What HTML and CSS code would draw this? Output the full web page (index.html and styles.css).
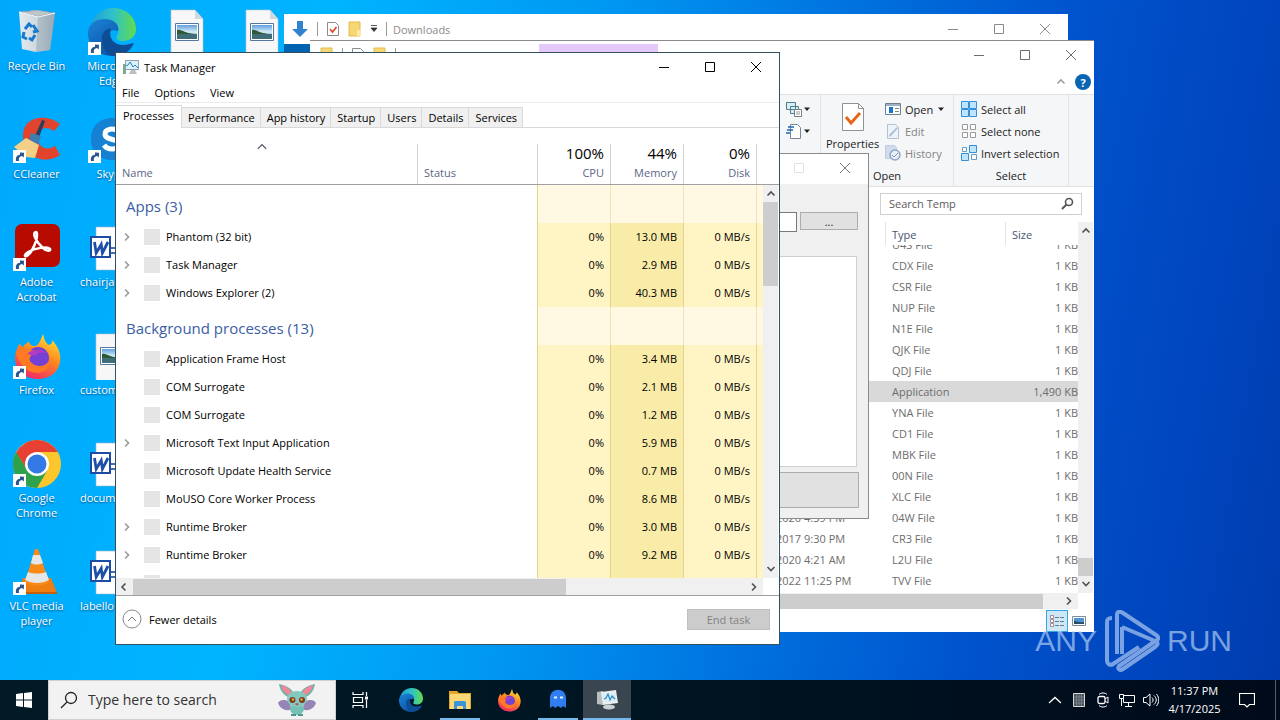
FILE: index.html
```html
<!DOCTYPE html>
<html lang="en">
<head>
<meta charset="utf-8">
<title>Desktop</title>
<link rel="stylesheet" href="styles.css">
</head>
<body>
<svg class="defs" aria-hidden="true">
  <defs>
    <linearGradient id="edgeA" x1="0" y1="0.3" x2="1" y2="0.3"><stop offset="0" stop-color="#1d9fdc"/><stop offset="0.5" stop-color="#2fc2c8"/><stop offset="1" stop-color="#62dc4c"/></linearGradient>
    <linearGradient id="edgeB" x1="0" y1="0" x2="0.6" y2="1"><stop offset="0" stop-color="#1b84d8"/><stop offset="1" stop-color="#0c55a8"/></linearGradient>
    <linearGradient id="fox" x1="0.8" y1="0" x2="0.3" y2="1"><stop offset="0" stop-color="#ffe53a"/><stop offset="0.45" stop-color="#ff8a1e"/><stop offset="1" stop-color="#f0256a"/></linearGradient>
    <linearGradient id="pic" x1="0" y1="0" x2="0" y2="1"><stop offset="0" stop-color="#5f9fe0"/><stop offset="0.5" stop-color="#d6ecf6"/><stop offset="1" stop-color="#79a8bb"/></linearGradient>
    <linearGradient id="bin" x1="0" y1="0" x2="1" y2="0"><stop offset="0" stop-color="#e3eaf0"/><stop offset="0.65" stop-color="#c9d3db"/><stop offset="1" stop-color="#8fa3b2"/></linearGradient>
  </defs>
  <symbol id="shortcut" viewBox="0 0 13 13"><path d="M0 0h13v13H0z" fill="#fff"/><path d="M3 11C2.500 7 4 5 7 4.800V2.500l4 .3L10.800 7.500 9 6C6 6.500 5.500 8.500 6 11z" fill="#29558f"/></symbol>
  <symbol id="edge" viewBox="0 0 48 48"><path d="M2 20C4 7 15 0 25 0c14 0 23 10 23 21 0 8-6 12-13 12-5 0-8-2-6-5 4-7-1-13-8-13C12 15 5 18 2 20z" fill="url(#edgeA)"/><path d="M0 25C0 15 9 11 17 11c9 0 15 6 13 12-8-3-14 3-11 12 2 8 9 12 13 12C15 51 0 41 0 25z" fill="url(#edgeB)"/><path d="M14 30c0-6 5-10 9-9-3 9 3 16 12 16 5 0 9-2 11-2-3 8-12 13-21 13-7-1-11-9-11-18z" fill="#0e4c94"/></symbol>
  <symbol id="firefox" viewBox="0 0 48 48"><path d="M30 2c2 6 1 7 6 11 4-1 3-4 3-5 8 8 10 18 7 26-3 8-11 13-21 13C12 47 2 38 2 26 2 20 4 16 7 11c1 3 2 4 3 4 3-5 4-2 5-6 2 3 3 5 7 5 3 0 5-4 8-12z" fill="url(#fox)"/><circle cx="25" cy="26" r="11" fill="#7540d4"/><path d="M3 20c5-6 10-3 15-2 3 0 5 2 2 4-5 3-4 8 0 10 6 4 13 2 17-4 1 13-16 17-25 8-4-4-8-10-9-16z" fill="#ff7a22"/><path d="M14 22c5-5 15-6 20 0-6-3-10-1-11 2z" fill="#b13cc4"/></symbol>
  <symbol id="picture" viewBox="0 0 48 48"><path d="M8 2h24l8 9v41H8z" fill="#f7f7f7" stroke="#bfc5ca" stroke-width=".6"/><path d="M32 2v9h8z" fill="#d2d9de"/><path d="M12.500 15.500h23v17h-23z" fill="#fff" stroke="#5277a0"/><path d="M14 17h20v14H14z" fill="url(#pic)"/><path d="M14 25c6-2 12 1 20 1v5H14z" fill="#3f6d78"/><path d="M14 22c5-1 8 4 17 4H14z" fill="#2d5a35"/></symbol>
  <symbol id="word" viewBox="0 0 48 48"><path d="M8 3h32v43H8z" fill="#fff" stroke="#9fb4cf" stroke-width=".6"/><path d="M22 24h16M22 29h16" stroke="#466fb3" stroke-width="2"/><path d="M2 12h21v22H2z" fill="#fff"/><path d="M3 13h19v20H3z" fill="none" stroke="#1c4ca4" stroke-width="2"/><path d="M6.500 18l1.700 11 5-8.500 1.200 8.500L20 18" fill="none" stroke="#1d4fa8" stroke-width="2.800"/></symbol>
  <symbol id="min" viewBox="0 0 12 12"><path d="M1 6.500h10" stroke="currentColor"/></symbol>
  <symbol id="max" viewBox="0 0 12 12"><path d="M1.500 1.500h9v9h-9z" fill="none" stroke="currentColor"/></symbol>
  <symbol id="close" viewBox="0 0 12 12"><path d="M1 1l10 10M11 1L1 11" stroke="currentColor"/></symbol>
  <symbol id="up" viewBox="0 0 10 10"><path d="M1.500 6.500L5 3l3.500 3.500" fill="none" stroke="currentColor" stroke-width="1.600"/></symbol>
  <symbol id="down" viewBox="0 0 10 10"><path d="M1.500 3L5 6.500 8.500 3" fill="none" stroke="currentColor" stroke-width="1.600"/></symbol>
  <symbol id="left" viewBox="0 0 10 10"><path d="M6.500 1.500L3 5l3.500 3.500" fill="none" stroke="currentColor" stroke-width="1.600"/></symbol>
  <symbol id="right" viewBox="0 0 10 10"><path d="M3 1.500L6.500 5 3 8.500" fill="none" stroke="currentColor" stroke-width="1.600"/></symbol>
  <symbol id="caret" viewBox="0 0 8 8"><path d="M1 2.500h6L4 6z" fill="currentColor"/></symbol>
  <symbol id="folder" viewBox="0 0 14 16"><path d="M1 1h11v14H1z" fill="#f7d774" stroke="#e4bb4a"/><path d="M9 9h4v6H9z" fill="#ffe9a6"/></symbol>
  <symbol id="checkdoc" viewBox="0 0 14 16"><path d="M1.500 1.500h8l3 3v10h-11z" fill="#fff" stroke="#8a8a8a"/><path d="M4 8l2.500 3L10.500 6" fill="none" stroke="#d9532c" stroke-width="1.800"/></symbol>
  <symbol id="monitor" viewBox="0 0 16 16"><path d="M0 5h3v10H0z" fill="#7ba98a"/><path d="M2.500 1.500h13v9h-13z" fill="#dcf3fb" stroke="#8aa0ad"/><path d="M3 7l2-1 2-3 3 5 2-2 3 3" fill="none" stroke="#2a7fb8"/><path d="M8 11h4l2 4H6z" fill="#b8c0c6"/></symbol>
</svg>

<div class="screen">
<main class="desktop">
  <div class="icons">
    <a class="icon" href="#"><svg viewBox="0 0 48 48"><path d="M6 4l18-2 18 3-5 37-14 2-14-3z" fill="url(#bin)"/><path d="M6 4l18-2 18 3-17 4z" fill="#8d979e"/><path d="M9 4.500l15-2 15 2.500-14 3z" fill="#bec6cb"/><path d="M25 9l17-4-5 37-14 2z" fill="#9aabb8" opacity=".6"/><path d="M6 4l19 5 17-4" fill="none" stroke="#f4f7f9" stroke-width="1.200"/><path d="M12 21l4-5 3 3M20 17l4 6-4 1M22 27l-3 5-3-2M14 31l-4-2 1-5" fill="none" stroke="#1879cf" stroke-width="3"/></svg><span>Recycle Bin</span></a>
    <a class="icon" href="#"><svg viewBox="0 0 48 48"><path d="M47 8C34-3 10 0 10 19c0 24 23 30 37 20l-5-9c-8 5-17 2-17-8s8-13 16-7z" fill="#e2432d"/><path d="M29 4l3 1-7 19-4-2z" fill="#283e5e"/><path d="M18 17l10 3-3 9-9-5z" fill="#3e7eae"/><path d="M1 31l12-9 13 7-4 13-9-1z" fill="#f3cf87"/><use href="#shortcut" x="0" y="34" width="13" height="13"/></svg><span>CCleaner</span></a>
    <a class="icon" href="#"><svg viewBox="0 0 48 48"><rect x="2" y="0" width="45" height="43" rx="7" fill="#b80b00"/><path d="M23 8c-4 0-1 9 7 16 4 4 8 3 7 1-2-3-15-1-22 3-5 3-3 6 0 3 4-3 9-14 9-20 0-2 0-3-1-3z" fill="none" stroke="#fff" stroke-width="2.500"/><use href="#shortcut" x="0" y="34" width="13" height="13"/></svg><span>Adobe Acrobat</span></a>
    <a class="icon" href="#"><svg viewBox="0 0 48 48"><use href="#firefox" width="48" height="48"/><use href="#shortcut" x="0" y="34" width="13" height="13"/></svg><span>Firefox</span></a>
    <a class="icon" href="#"><svg viewBox="0 0 48 48"><circle cx="24" cy="24" r="24" fill="#fcc62d"/><path d="M3 13A24 24 0 0 1 45 12H24L14 29z" fill="#e84134"/><path d="M3 12A24 24 0 0 0 24 48L34 31 13 28z" fill="#2da24b"/><circle cx="24" cy="24" r="12" fill="#fff"/><circle cx="24" cy="24" r="9.500" fill="#3579e6"/><use href="#shortcut" x="0" y="34" width="13" height="13"/></svg><span>Google Chrome</span></a>
    <a class="icon" href="#"><svg viewBox="0 0 48 48"><path d="M10 30h28l6 15H6z" fill="#ee7d12"/><path d="M6 44h38v2H6z" fill="#c85f08"/><path d="M22 1h3l11 33c-6 5-18 5-24 0z" fill="#f98a18"/><path d="M20 7h7l3 8c-4 2-9 2-12 0z" fill="#e5e6e8"/><path d="M15 24c6 2 13 2 18 0l3 8c-7 4-17 4-24 0z" fill="#e5e6e8"/><use href="#shortcut" x="0" y="34" width="13" height="13"/></svg><span>VLC media player</span></a>
    <a class="icon" href="#"><svg viewBox="0 0 48 48"><use href="#edge" width="48" height="48"/><use href="#shortcut" x="0" y="34" width="13" height="13"/></svg><span>Microsoft Edge</span></a>
    <a class="icon" href="#"><svg viewBox="0 0 48 48"><rect x="3" y="2" width="42" height="42" rx="20" fill="#1681d2"/><path d="M31 16c-5-5-14-3-14 2 0 7 14 4 14 10 0 6-11 7-15 1" fill="none" stroke="#fff" stroke-width="5"/><use href="#shortcut" x="0" y="34" width="13" height="13"/></svg><span>Skype</span></a>
    <a class="icon cut" href="#"><svg viewBox="0 0 48 48"><use href="#word" width="48" height="48"/></svg><span>chairja</span></a>
    <a class="icon cut" href="#"><svg viewBox="0 0 48 48"><use href="#picture" width="48" height="48"/></svg><span>custom</span></a>
    <a class="icon cut" href="#"><svg viewBox="0 0 48 48"><use href="#word" width="48" height="48"/></svg><span>docum</span></a>
    <a class="icon cut" href="#"><svg viewBox="0 0 48 48"><use href="#word" width="48" height="48"/></svg><span>labello</span></a>
    <a class="icon third" href="#" aria-label="Image file"><svg viewBox="0 0 48 48"><use href="#picture" width="48" height="48"/></svg></a>
    <a class="icon fourth" href="#" aria-label="Image file"><svg viewBox="0 0 48 48"><use href="#picture" width="48" height="48"/></svg></a>
  </div>

  <section class="window downloads">
    <header class="titlebar">
      <svg class="i18" viewBox="0 0 18 18"><path d="M6 1h6v8h5l-8 8-8-8h5z" fill="#2f83cf"/></svg>
      <span class="sep"></span>
      <svg class="tool" viewBox="0 0 14 16"><use href="#checkdoc" width="14" height="16"/></svg>
      <svg class="tool" viewBox="0 0 14 16"><use href="#folder" width="14" height="16"/></svg>
      <svg class="i8" viewBox="0 0 8 8"><path d="M1 0.500h6M1 3h6L4 6.500z" stroke="#333" fill="#333" stroke-width=".8"/></svg>
      <span class="sep"></span>
      <span class="title">Downloads</span>
      <button aria-label="Minimize"><svg><use href="#min"/></svg></button>
      <button aria-label="Maximize"><svg><use href="#max"/></svg></button>
      <button aria-label="Close"><svg><use href="#close"/></svg></button>
    </header>
    <div class="filetab"></div>
  </section>

  <section class="window temp">
    <header class="titlebar">
      <svg class="tool" viewBox="0 0 14 16"><use href="#folder" width="14" height="16"/></svg>
      <span class="sep"></span>
      <svg class="tool" viewBox="0 0 14 16"><use href="#checkdoc" width="14" height="16"/></svg>
      <svg class="tool" viewBox="0 0 14 16"><use href="#folder" width="14" height="16"/></svg>
      <span class="sep"></span>
      <span class="apptools"></span>
      <span class="title">Temp</span>
      <button aria-label="Minimize"><svg><use href="#min"/></svg></button>
      <button aria-label="Maximize"><svg><use href="#max"/></svg></button>
      <button aria-label="Close"><svg><use href="#close"/></svg></button>
    </header>
    <div class="ribbontabs">
      <svg class="i10" viewBox="0 0 10 10"><use href="#up" width="10" height="10"/></svg>
      <button class="help" aria-label="Help">?</button>
    </div>
    <div class="ribbon">
      <div class="group new">
        <button aria-label="New item"><svg class="i16" viewBox="0 0 16 16"><path d="M.5 1.500h9v7h-9zM4.500 5.500h8v7h-8z" fill="#d8eef4" stroke="#4c7e8d"/><path d="M8.500 8.500h7v7h-7z" fill="#fff" stroke="#7b7b7b"/><path d="M10 11h4M10 13h4" stroke="#999"/></svg><svg class="i8"><use href="#caret"/></svg></button>
        <button aria-label="Easy access"><svg class="i16" viewBox="0 0 16 16"><path d="M4.500 1.500h7l3 3v11h-10z" fill="#fff" stroke="#77879a"/><path d="M2 4h6M1 7h6M0 10h4" stroke="#1b68b2" stroke-width="1.500"/></svg><svg class="i8"><use href="#caret"/></svg></button>
      </div>
      <div class="group open">
        <div class="cols">
          <button class="props"><svg viewBox="0 0 24 30"><path d="M1.500 1.500h16l5 5v22h-21z" fill="#fff" stroke="#929292"/><path d="M17.500 1.500v5h5" fill="none" stroke="#929292"/><path d="M5 15l5 6 9-10" fill="none" stroke="#e8641b" stroke-width="3"/></svg><span>Properties</span></button>
          <div class="stack">
            <button><svg class="i16" viewBox="0 0 16 16"><path d="M.5 2.500h15v11H.5z" fill="#fff" stroke="#6e7f90"/><path d="M1 3h14v2H1z" fill="#9fb2c2"/><path d="M4 6h4v6H4z" fill="#1377cd"/><path d="M10 7.500h4M10 10.500h4" stroke="#888"/></svg>Open<svg class="i8"><use href="#caret"/></svg></button>
            <button disabled><svg class="i16" viewBox="0 0 16 16"><path d="M2.500 1.500h8l3 3v11h-11z" fill="#eef3f9" stroke="#b3c1d1"/><path d="M13 5l-7 8-2 1 .5-2.500L12 4z" fill="#a9bcd6"/></svg>Edit</button>
            <button disabled><svg class="i16" viewBox="0 0 16 16"><path d="M.5.500h9l2 2v11H.5z" fill="#d3dcec" stroke="#c0cde2"/><circle cx="10" cy="10" r="5" fill="#e8eef6" stroke="#8ea6c6" stroke-width="1.500"/><path d="M7 10l2 2 4-4" stroke="#8297b6" fill="none"/></svg>History</button>
          </div>
        </div>
        <span class="caption">Open</span>
      </div>
      <div class="group select">
        <div class="stack">
          <button><svg class="i16" viewBox="0 0 16 16"><path d="M.5.500h7v7h-7zM8.500.500h7v7h-7zM.5 8.500h7v7h-7zM8.500 8.500h7v7h-7z" fill="#bfe4fb" stroke="#3191da"/></svg>Select all</button>
          <button><svg class="i16" viewBox="0 0 16 16"><path d="M1.500 1.500h5v5h-5zM9.500 1.500h5v5h-5zM1.500 9.500h5v5h-5zM9.500 9.500h5v5h-5z" fill="#fff" stroke="#999"/></svg>Select none</button>
          <button><svg class="i16" viewBox="0 0 16 16"><path d="M8.500.500h7v7h-7zM.5 8.500h7v7h-7z" fill="#bfe4fb" stroke="#3191da"/><path d="M1.500 2.500h4v4h-4zM10.500 9.500h5v5h-5z" fill="#fff" stroke="#6a9cc4"/></svg>Invert selection</button>
        </div>
        <span class="caption">Select</span>
      </div>
    </div>
    <div class="navrow">
      <label class="search"><input type="text" placeholder="Search Temp" aria-label="Search Temp"><svg class="i14" viewBox="0 0 14 14"><circle cx="9" cy="5" r="3.500" fill="none" stroke="#555" stroke-width="1.600"/><path d="M6.500 7.500L2 12" stroke="#555" stroke-width="2"/></svg></label>
    </div>
    <div class="files">
      <div class="filepane">
        <div class="filescroll">
          <table class="filetable">
            <colgroup><col><col class="cdate"><col class="ctype"><col class="csize"></colgroup>
            <thead><tr><th></th><th></th><th>Type</th><th>Size</th></tr></thead>
            <tbody>
              <tr class="under"><td></td><td></td><td><span>U4S File</span></td><td><span>1 KB</span></td></tr>
              <tr><td></td><td></td><td>CDX File</td><td>1 KB</td></tr>
              <tr><td></td><td></td><td>CSR File</td><td>1 KB</td></tr>
              <tr><td></td><td></td><td>NUP File</td><td>1 KB</td></tr>
              <tr><td></td><td></td><td>N1E File</td><td>1 KB</td></tr>
              <tr><td></td><td></td><td>QJK File</td><td>1 KB</td></tr>
              <tr><td></td><td></td><td>QDJ File</td><td>1 KB</td></tr>
              <tr class="picked"><td></td><td></td><td>Application</td><td>1,490 KB</td></tr>
              <tr><td></td><td></td><td>YNA File</td><td>1 KB</td></tr>
              <tr><td></td><td></td><td>CD1 File</td><td>1 KB</td></tr>
              <tr><td></td><td></td><td>MBK File</td><td>1 KB</td></tr>
              <tr><td></td><td></td><td>00N File</td><td>1 KB</td></tr>
              <tr><td></td><td></td><td>XLC File</td><td>1 KB</td></tr>
              <tr><td></td><td>2020 4:39 PM</td><td>04W File</td><td>1 KB</td></tr>
              <tr><td></td><td>2017 9:30 PM</td><td>CR3 File</td><td>1 KB</td></tr>
              <tr><td></td><td>2020 4:21 AM</td><td>L2U File</td><td>1 KB</td></tr>
              <tr><td></td><td>2022 11:25 PM</td><td>TVV File</td><td>1 KB</td></tr>
            </tbody>
          </table>
        </div>
        <div class="hscroll"><i class="thumb"></i><svg class="i10"><use href="#right"/></svg></div>
      </div>
      <div class="vscroll"><svg class="i10"><use href="#up"/></svg><i class="thumb"></i><svg class="i10"><use href="#down"/></svg></div>
    </div>
    <footer class="status">
      <button class="on" aria-label="Details view"><svg class="i16" viewBox="0 0 16 16"><path d="M1.500 2.500h3v3h-3zM1.500 6.500h3v3h-3zM1.500 10.500h3v3h-3z" fill="#fff" stroke="#a98a92"/><path d="M6 4.500h4M11 4.500h4M6 8.500h4M11 8.500h4M6 12.500h4M11 12.500h4" stroke="#6c7a83"/></svg></button>
      <button aria-label="Icon view"><svg class="i14" viewBox="0 0 14 14"><path d="M.5 2.500h13v9H.5z" fill="#fff" stroke="#7e8b99"/><path d="M2 4h10v6H2z" fill="#4e94d4"/><path d="M2 7c4 0 5 2 10 1v2H2z" fill="#284e66"/></svg></button>
    </footer>
  </section>

  <section class="window dialog">
    <header class="titlebar">
      <span class="title"></span>
      <button class="faint" aria-label="Maximize" disabled><svg><use href="#max"/></svg></button>
      <button aria-label="Close"><svg><use href="#close"/></svg></button>
    </header>
    <div class="dialogbody">
      <div class="pick"><input type="text" aria-label="Path"><button>...</button></div>
      <div class="log"></div>
      <button class="big" aria-label="Run"></button>
    </div>
  </section>

  <section class="window taskmgr">
    <header class="titlebar">
      <svg class="i16" viewBox="0 0 16 16"><use href="#monitor" width="16" height="16"/></svg>
      <span class="title">Task Manager</span>
      <button aria-label="Minimize"><svg><use href="#min"/></svg></button>
      <button aria-label="Maximize"><svg><use href="#max"/></svg></button>
      <button aria-label="Close"><svg><use href="#close"/></svg></button>
    </header>
    <nav class="menubar"><button>File</button><button>Options</button><button>View</button></nav>
    <nav class="tabs"><button class="on">Processes</button><button>Performance</button><button>App history</button><button>Startup</button><button>Users</button><button>Details</button><button>Services</button></nav>
    <div class="procs">
      <div class="procview">
        <table class="proctable">
          <colgroup><col><col class="cstatus"><col class="cnum"><col class="cnum"><col class="cnum"><col class="crest"></colgroup>
          <thead><tr>
            <th><svg class="i12 sort" viewBox="0 0 10 10"><path d="M1.500 6.500L5 3l3.500 3.500" fill="none" stroke="#4a4f63"/></svg><div>Name</div></th>
            <th><div>Status</div></th>
            <th><div><b>100%</b>CPU</div></th><th><div><b>44%</b>Memory</div></th><th><div><b>0%</b>Disk</div></th><th></th>
          </tr></thead>
          <tbody>
            <tr class="section"><td>Apps (3)</td><td></td><td></td><td></td><td></td><td></td></tr>
            <tr><td><div><svg class="exp"><use href="#right"/></svg><i></i>Phantom (32 bit)</div></td><td></td><td>0%</td><td>13.0 MB</td><td>0 MB/s</td><td></td></tr>
            <tr><td><div><svg class="exp"><use href="#right"/></svg><i></i>Task Manager</div></td><td></td><td>0%</td><td>2.9 MB</td><td>0 MB/s</td><td></td></tr>
            <tr><td><div><svg class="exp"><use href="#right"/></svg><i></i>Windows Explorer (2)</div></td><td></td><td>0%</td><td>40.3 MB</td><td>0 MB/s</td><td></td></tr>
            <tr class="section"><td>Background processes (13)</td><td></td><td></td><td></td><td></td><td></td></tr>
            <tr><td><div><svg class="exp"></svg><i></i>Application Frame Host</div></td><td></td><td>0%</td><td>3.4 MB</td><td>0 MB/s</td><td></td></tr>
            <tr><td><div><svg class="exp"></svg><i></i>COM Surrogate</div></td><td></td><td>0%</td><td>2.1 MB</td><td>0 MB/s</td><td></td></tr>
            <tr><td><div><svg class="exp"></svg><i></i>COM Surrogate</div></td><td></td><td>0%</td><td>1.2 MB</td><td>0 MB/s</td><td></td></tr>
            <tr><td><div><svg class="exp"><use href="#right"/></svg><i></i>Microsoft Text Input Application</div></td><td></td><td>0%</td><td>5.9 MB</td><td>0 MB/s</td><td></td></tr>
            <tr><td><div><svg class="exp"></svg><i></i>Microsoft Update Health Service</div></td><td></td><td>0%</td><td>0.7 MB</td><td>0 MB/s</td><td></td></tr>
            <tr><td><div><svg class="exp"></svg><i></i>MoUSO Core Worker Process</div></td><td></td><td>0%</td><td>8.6 MB</td><td>0 MB/s</td><td></td></tr>
            <tr><td><div><svg class="exp"><use href="#right"/></svg><i></i>Runtime Broker</div></td><td></td><td>0%</td><td>3.0 MB</td><td>0 MB/s</td><td></td></tr>
            <tr><td><div><svg class="exp"><use href="#right"/></svg><i></i>Runtime Broker</div></td><td></td><td>0%</td><td>9.2 MB</td><td>0 MB/s</td><td></td></tr>
            <tr><td><div><svg class="exp"></svg><i></i></div></td><td></td><td></td><td></td><td></td><td></td></tr>
          </tbody>
        </table>
      </div>
      <div class="vside">
        <div class="headcap"></div>
        <div class="vscroll"><svg class="i10"><use href="#up"/></svg><i class="thumb"></i><svg class="i10"><use href="#down"/></svg></div>
      </div>
    </div>
    <div class="hscroll"><svg class="i10"><use href="#left"/></svg><i class="thumb"></i><svg class="i10"><use href="#right"/></svg></div>
    <footer class="tmfoot">
      <button class="fewer"><svg viewBox="0 0 20 20"><circle cx="10" cy="10" r="9" fill="none" stroke="#8a8a8a"/><path d="M6 12l4-4 4 4" fill="none" stroke="#777"/></svg>Fewer details</button>
      <button class="endtask" disabled>End task</button>
    </footer>
  </section>

  <div class="watermark">
    <span>ANY</span>
    <svg viewBox="0 0 56 62"><path d="M8 8c-4 0-5 1-5 4v38c0 4 3 6 6 4l26-17M13 44V5c0-4 3-4 6-2l33 22c3 2 3 4 0 6M18 17l33 14c4 2 3 4 0 6L19 59c-3 2-6 0-4-3l35-24M18 17v27" fill="none" stroke="currentColor" stroke-width="4" stroke-linejoin="round"/></svg>
    <span>RUN</span>
  </div>
</main>

<footer class="taskbar">
  <button class="start" aria-label="Start"><svg class="i16" viewBox="0 0 16 16"><path d="M0 2l7-1v6.500H0zM8 .9L16 0v7.500H8zM0 8.500h7V15l-7-1zM8 8.500h8V16l-8-1z" fill="#fff"/></svg></button>
  <label class="tasksearch">
    <svg class="i18" viewBox="0 0 18 18"><circle cx="11" cy="7" r="5.500" fill="none" stroke="#222" stroke-width="1.300"/><path d="M7 11l-6 6" stroke="#222" stroke-width="1.300"/></svg>
    <input type="text" placeholder="Type here to search" aria-label="Type here to search">
    <svg class="critter" viewBox="0 0 38 34"><path d="M12 19C5 15 1 18 0 20c2 6 9 9 13 6zM26 19c7-4 11-1 12 1-2 6-9 9-13 6z" fill="#9584b5"/><path d="M13 15C5 13 2 7 1 1c6 1 13 4 15 10zM25 15C33 13 36 7 37 1c-6 1-13 4-15 10z" fill="#6db5aa"/><path d="M13 13C7 11 4 7 3 2c5 1 9 4 11 8zM25 13C31 11 34 7 35 2c-5 1-9 4-11 8z" fill="#ef8795"/><ellipse cx="19" cy="26" rx="7" ry="6" fill="#75c2b4"/><ellipse cx="19" cy="16" rx="10" ry="8" fill="#83c9bd"/><circle cx="14.500" cy="17" r="3" fill="#7a3d1e"/><circle cx="24" cy="17" r="3" fill="#7a3d1e"/><circle cx="15" cy="16.500" r="1.200" fill="#e9a648"/><circle cx="23.500" cy="16.500" r="1.200" fill="#e9a648"/><path d="M17 21l2-1 2 1-2 1.500z" fill="#c2495b"/><path d="M13 31h5v2h-5zM20 31h5v2h-5z" fill="#4d958d"/></svg>
  </label>
  <button class="view" aria-label="Task View"><svg class="i16" viewBox="0 0 16 16"><path d="M1 0v2.500h10V0M1.500 5.500h9v5h-9zM1 16v-2.500h10V16M14.500 0v4M14.500 8v8" fill="none" stroke="#fff" stroke-width="1.200"/><path d="M13 4.500h3v3h-3z" fill="#fff"/></svg></button>
  <div class="apps">
    <button aria-label="Edge"><svg class="i24" viewBox="0 0 48 48"><use href="#edge" width="48" height="48"/></svg></button>
    <button class="run" aria-label="File Explorer"><svg class="i24" viewBox="0 0 24 24"><path d="M1 3h8l2 2h12v16H1z" fill="#e6a629"/><path d="M2 6h20v15H2z" fill="#fcd775"/><path d="M6 21v-6c0-2 1-2 2-2h8c2 0 2 1 2 2v6h-3v-3H9v3z" fill="#3a94d5"/></svg></button>
    <button aria-label="Firefox"><svg class="i24" viewBox="0 0 48 48"><use href="#firefox" width="48" height="48"/></svg></button>
    <button class="run" aria-label="Phantom"><svg class="i24" viewBox="0 0 24 24"><path d="M4 20V10c0-11 16-11 16 0v10l-3-2-2 2-3-2-3 2-2-2z" fill="#2f7df0"/><path d="M8 8.500h3v2H8zM14 8.500h3v2h-3z" fill="#e6f3ff"/></svg></button>
    <button class="run active" aria-label="Task Manager"><svg class="i24" viewBox="0 0 24 24"><path d="M2 4l6-1v14l-6-1z" fill="#b9bdbd"/><path d="M6 4l15-2 2 13-15 2z" fill="#e9eeee"/><path d="M8 6l12-1 1 8-12 1z" fill="#d5edf8"/><path d="M9 11l2-1 2-4 2 6 2-4 3 3" fill="none" stroke="#308ac3" stroke-width="1.200"/><ellipse cx="14" cy="19" rx="6" ry="2.500" fill="#ccd1d1"/></svg></button>
  </div>
  <div class="tray">
    <svg class="i16" viewBox="0 0 16 16"><path d="M2 11l6-5.500 6 5.500" fill="none" stroke="#fff" stroke-width="1.300"/></svg>
    <svg class="i16" viewBox="0 0 16 16"><path d="M2.500 1.500h11v13h-11z" fill="#4a525a" stroke="#d8d8d8"/><path d="M5.500 2v12M8 2v12M10.500 2v12M3 5h10M3 8h10M3 11h10" stroke="#8c959c" stroke-width=".6"/></svg>
    <svg class="i16" viewBox="0 0 16 16"><rect x="3" y="4.500" width="7" height="7" rx="1.500" fill="none" stroke="#fff" stroke-width="1.300"/><path d="M10 7l3-2v6l-3-2M4 2.500c2-2 6-2 8 0M4 13.500c2 2 6 2 8 0" fill="none" stroke="#fff"/></svg>
    <svg class="i16" viewBox="0 0 16 16"><path d="M4 3.500h11.500v7H4.500v-4M9.500 11v3M6 14.500h7M.5 2.500h4v4h-4zM2.500 6v8" fill="none" stroke="#fff"/></svg>
    <svg class="i16" viewBox="0 0 16 16"><path d="M.5 5.500h2.500l4-3.500v12l-4-3.500H.5zM9 5.500c1.500 1.500 1.500 3.500 0 5M11 3.500c3 3 3 6 0 9M13.500 2c3 4 3 8 0 12" fill="none" stroke="#fff"/></svg>
  </div>
  <time class="clock"><span>11:37 PM</span><span>4/17/2025</span></time>
  <button class="notify" aria-label="Notifications"><svg class="i16" viewBox="0 0 16 16"><path d="M.5 1.500h15v11h-5L8 15l-2.500-2.500h-5z" fill="none" stroke="#fff" stroke-width="1.200"/></svg></button>
</footer>
</div>
</body>
</html>
```
FILE: styles.css
```css
* { box-sizing: border-box; }
html, body { height: 100%; margin: 0; }
body { font: 11px/15px "Open Sans", "Noto Sans", sans-serif; color: #000; overflow: hidden; }
button, input { font: inherit; color: inherit; border: 0; padding: 0; margin: 0; background: none; }
table { border-collapse: separate; border-spacing: 0; table-layout: fixed; width: 100%; }
td, th { padding: 0; font-weight: 400; text-align: left; white-space: nowrap; }
svg { display: block; flex: none; }
.defs { position: absolute; width: 0; height: 0; }
.i8 { width: 8px; height: 8px; }
.i10 { width: 10px; height: 10px; }
.i12 { width: 12px; height: 12px; }
.i14 { width: 14px; height: 14px; }
.i16 { width: 16px; height: 16px; }
.i18 { width: 18px; height: 18px; }
.i24 { width: 24px; height: 24px; }

.screen { display: flex; flex-direction: column; height: 100vh; }
.desktop {
  position: relative; flex: 1; min-height: 0; overflow: hidden;
  background: linear-gradient(100deg, #00a8fc 0%, #00b4ff 24%, #0098f2 43%, #0070de 62%, #0052cc 78%, #0044bc 92%, #003cae 100%);
}
.icons { display: grid; grid-auto-flow: column; grid-template-rows: repeat(6, 108px); grid-auto-columns: 75px; }
.icon { display: flex; flex-direction: column; align-items: center; padding: 8px 7px 0 5px; gap: 2px; color: #fff; text-decoration: none; text-align: center; text-shadow: 0 1px 2px #004a80; }
.icon svg { width: 48px; height: 48px; overflow: visible; }
.cut span { align-self: flex-start; }
.third { grid-column: 3; grid-row: 1; }
.fourth { grid-column: 4; grid-row: 1; }

.window { position: absolute; display: flex; flex-direction: column; background: #fff; }
.titlebar { display: flex; align-items: center; height: 30px; padding-left: 7px; gap: 5px; }
.titlebar .title { flex: 1; white-space: nowrap; }
.titlebar button { width: 46px; height: 28px; margin-left: -5px; display: grid; place-items: center; }
.titlebar button svg { width: 12px; height: 12px; }
.sep { width: 1px; height: 14px; background: #9a9a9a; }
.tool { width: 14px; height: 16px; }

.downloads { left: 284px; top: 14px; width: 784px; height: 590px; color: #8a8a8a; }
.downloads .titlebar, .temp .titlebar { gap: 8px; }
.downloads .titlebar button, .temp .titlebar button { margin-left: -8px; }
.downloads .title { margin-left: -2px; }
.filetab { width: 56px; height: 24px; background: #0063b1; }

.temp { left: 310px; top: 41px; width: 784px; height: 591px; box-shadow: 0 -1px #8c8c8c; color: #6d6d6d; }
.temp .titlebar { height: 29px; padding-bottom: 1px; padding-left: 10px; }
.apptools { width: 119px; height: 25px; margin: 0 4px 0 135px; align-self: flex-end; background: #e4c9fa; }
.ribbontabs { display: flex; justify-content: flex-end; align-items: center; gap: 9px; height: 24px; padding-right: 3px; color: #a0a0a0; }
.help { width: 16px; height: 16px; border-radius: 50%; background: #0a64b4; color: #fff; font-weight: 700; }
.ribbon { display: flex; justify-content: flex-end; height: 93px; padding-right: 25px; background: #f5f6f7; border-top: 1px solid #dfe1e3; border-bottom: 1px solid #dfe1e3; color: #222; }
.group { display: flex; flex-direction: column; padding-top: 3px; border-right: 1px solid #e0e2e4; }
.group button { display: flex; align-items: center; gap: 4px; height: 22px; white-space: nowrap; }
.group button:disabled { color: #838383; }
.new { width: 35px; }
.new button { gap: 1px; }
.open { width: 133px; }
.select { width: 115px; padding-left: 7px; }
.select .caption { margin-left: -7px; }
.cols { display: flex; gap: 7px; padding-left: 6px; }
.group .props { flex-direction: column; gap: 4px; height: 66px; width: 51px; padding-top: 4px; }
.props svg { width: 24px; height: 30px; }
.caption { height: 24px; line-height: 24px; text-align: center; }
.navrow { display: flex; justify-content: flex-end; padding: 6px 12px 6px 0; height: 35px; }
.search { display: flex; align-items: center; width: 202px; height: 22px; padding: 0 7px 1px 8px; border: 1px solid #d0d0d0; }
.search input { flex: 1; min-width: 0; }
input::placeholder { color: #5c5c5c; opacity: 1; }
.files { display: flex; flex: 1; min-height: 0; padding-right: 1px; }
.filepane { flex: 1; min-width: 0; display: flex; flex-direction: column; }
.filescroll { flex: 1; min-height: 0; overflow: hidden; }
.filetable td { height: 21px; padding-left: 7px; line-height: 21px; }
.filetable th { height: 23px; padding: 2px 0 0 6px; color: #44546f; }
.filetable th:nth-child(n+3) { border-left: 1px solid #e4e4e4; }
.filetable td:nth-child(2) { padding-left: 0; }
.filetable td:last-child { text-align: right; padding: 0; }
.filetable .under td { height: 10px; line-height: 21px; }
.under span { display: flex; align-items: flex-end; height: 10px; overflow: hidden; }
.under td:last-child span { justify-content: flex-end; }
.picked td { background: #d9d9d9; }
.cdate { width: 109px; }
.ctype { width: 120px; }
.csize { width: 73px; }
.vscroll { display: flex; flex-direction: column; align-items: center; width: 15px; padding: 4px 0; background: #f0f0f0; color: #505050; }
.hscroll { display: flex; align-items: center; height: 16px; background: #f0f0f0; color: #505050; }
.thumb { background: #cdcdcd; }
.files .vscroll { margin-bottom: 16px; justify-content: flex-end; }
.files .vscroll .i10:first-child { margin-bottom: auto; }
.files .vscroll .thumb { width: 15px; height: 18px; margin-bottom: 3px; }
.files .hscroll { padding-right: 4px; justify-content: space-between; }
.files .hscroll .thumb { width: 733px; height: 15px; }
.status { display: flex; justify-content: flex-end; align-items: center; height: 23px; padding-right: 4px; }
.status button { width: 22px; height: 22px; display: grid; place-items: center; }
.status .on { background: #cce8f8; border: 1px solid #35a4e0; }

.dialog { left: 480px; top: 153px; width: 389px; height: 366px; border: 1px solid #8c8c8c; color: #777; }
.dialog .titlebar { padding-bottom: 2px; }
.dialog .titlebar .faint { color: #e2e2e2; }
.dialogbody { flex: 1; display: flex; flex-direction: column; background: #f0f0f0; padding: 28px 9px 10px; }
.pick { display: flex; gap: 3px; margin-right: 1px; }
.pick input { flex: 1; height: 20px; background: #fff; border: 1px solid #7a7a7a; }
.pick button { width: 58px; height: 18px; background: #e1e1e1; border: 1px solid #adadad; color: #222; }
.log { flex: 1; margin: 24px 2px 5px 0; background: #fff; border: 1px solid #cfcfcf; }
.big { height: 36px; background: #e1e1e1; }
.dialogbody .big { border: 1px solid #adadad; }

.taskmgr { left: 115px; top: 52px; width: 665px; height: 593px; border: 1px solid #33505f; }
.taskmgr .titlebar { padding-bottom: 2px; }
.menubar { display: flex; gap: 15px; height: 20px; padding-left: 6px; border-bottom: 1px solid #ececec; }
.tabs { display: flex; align-items: flex-end; height: 25px; border-bottom: 1px solid #d9d9d9; }
.tabs button { height: 20px; padding: 0 5px 0 6px; background: #f0f0f0; border: 1px solid #d9d9d9; border-left: 0; border-bottom: 0; white-space: nowrap; }
.tabs .on { height: 23px; margin-bottom: -1px; padding: 0 7px 3px; background: #fff; }
.procs { display: flex; flex: 1; min-height: 0; }
.procview { flex: 1; min-width: 0; overflow: hidden; }
.cstatus { width: 120px; }
.cnum { width: 73px; }
.crest { width: 6px; }
.proctable thead th { position: relative; height: 57px; padding: 16px 0 0; vertical-align: bottom; border-bottom: 1px solid #a0a0a0; color: #5b6785; }
.proctable thead div { height: 40px; display: flex; flex-direction: column; justify-content: flex-end; padding: 0 6px 4px; border-right: 1px solid #d0d0d0; }
.proctable thead th:nth-child(n+3) div { text-align: right; }
.proctable b { font-size: 15px; line-height: 24px; font-weight: 400; color: #000; }
.sort { position: absolute; left: 140px; top: 13px; }
.proctable tbody td { height: 28px; padding-bottom: 1px; }
.proctable tbody .section td { height: 38px; padding: 5px 0 0 10px; font-size: 15px; color: #3a5da6; }
.proctable tbody td div { display: flex; align-items: center; padding-left: 6px; }
.proctable tbody td i { width: 16px; height: 16px; margin-right: 6px; background: #e5e5e5; }
.exp { width: 10px; height: 10px; margin-right: 12px; color: #999; }
.proctable tbody td:nth-child(n+2) { border-right: 1px solid #e3d38f; }
.proctable tbody td:nth-child(n+3) { text-align: right; padding-right: 6px; background: #fff4c4; }
.proctable tbody td:nth-child(4) { background: #f9eca8; }
.proctable tbody td:nth-child(6) { padding: 0; border: 0; }
.proctable tbody .section td:nth-child(n+3) { background: #fff9e4; border-color: #efe4bb; }
.vside { display: flex; flex-direction: column; width: 16px; }
.headcap { height: 57px; border-bottom: 1px solid #a0a0a0; }
.vside .vscroll { flex: 1; justify-content: flex-end; }
.vside .thumb { width: 15px; height: 84px; margin: 3px 0 auto; }
.taskmgr > .hscroll { height: 17px; margin-right: 16px; padding: 0 4px 0 3px; gap: 4px; }
.taskmgr > .hscroll .thumb { width: 433px; height: 16px; margin-right: auto; }
.tmfoot { display: flex; align-items: center; justify-content: space-between; height: 49px; padding: 0 9px 2px 6px; border-top: 1px solid #a0a0a0; }
.fewer { display: flex; align-items: center; gap: 7px; }
.fewer svg { width: 20px; height: 20px; }
.endtask { width: 83px; height: 21px; background: #ccc; border: 1px solid #bfbfbf; color: #838383; }

.watermark { position: absolute; right: 48px; bottom: 8px; display: flex; align-items: center; gap: 7px; color: #bcd4f6; opacity: .65; font: 30px/62px "Liberation Sans Narrow", "Liberation Sans", sans-serif; }
.watermark svg { width: 56px; height: 62px; }

.taskbar { display: flex; align-items: stretch; height: 40px; background: linear-gradient(90deg, #011a26, #001522 50%, #000a1a); color: #fff; }
.taskbar button { display: grid; place-items: center; }
.start, .view { width: 48px; }
.tasksearch { display: flex; align-items: center; gap: 10px; width: 288px; padding: 0 19px 0 11px; background: #f2f2f2; border: 1px solid #d0d0d0; }
.tasksearch input { flex: 1; min-width: 0; font-size: 14px; line-height: 22px; color: #333; }
.tasksearch input::placeholder { color: #333; }
.critter { width: 38px; height: 34px; }
.apps { display: flex; gap: 1px; margin-left: 3px; }
.apps button { width: 48px; position: relative; }
.run::after { content: ""; position: absolute; left: 4px; right: 4px; bottom: 0; height: 2px; background: #76b9ed; }
.active { background: #3a464f; }
.taskbar .active { background: #3a464f; }
.active::after { left: 0; right: 0; }
.tray { display: flex; align-items: center; gap: 8px; margin-left: auto; }
.clock { display: flex; flex-direction: column; justify-content: center; text-align: center; width: 71px; line-height: 18px; }
.taskbar .notify { width: 46px; padding-right: 12px; border-right: 1px solid #55606a; margin-right: 4px; }
```
